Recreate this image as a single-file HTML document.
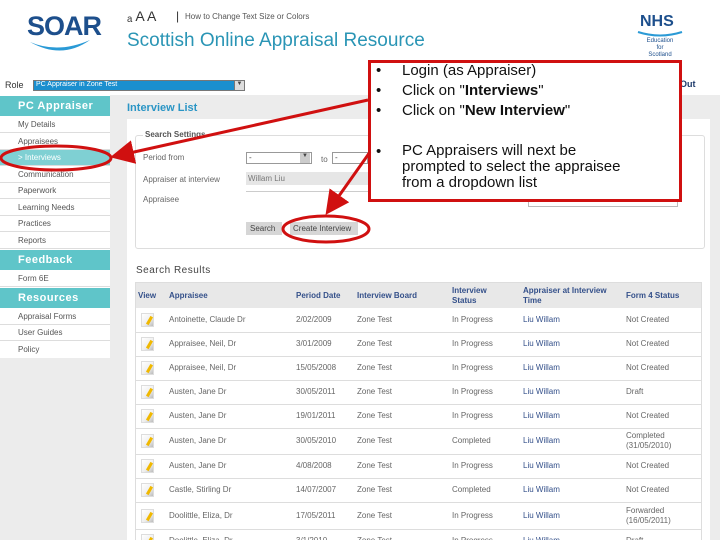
<!DOCTYPE html>
<html style="width:720px;height:540px;overflow:hidden"><head><meta charset="utf-8"><style>
*{margin:0;padding:0;box-sizing:border-box}
body{width:720px;height:540px;overflow:hidden;background:#fff;font-family:"Liberation Sans",Arial,sans-serif;position:relative;color:#444}
.a{position:absolute;white-space:nowrap}
.sb{position:absolute;left:0;width:110px;background:#fff;font-size:8px;color:#555}
.item{position:absolute;left:0;width:110px;height:16px;border-bottom:1px solid #ddd;padding:3px 0 0 18px;font-size:8px;color:#555}
.hd{position:absolute;left:0;width:110px;background:#5fc5c9;color:#fff;font-weight:bold;font-size:11px;padding-left:18px;letter-spacing:.5px}
.t{position:absolute;font-size:8px;color:#666;white-space:nowrap}
.th{position:absolute;font-size:8px;color:#34508a;font-weight:bold;white-space:nowrap}
.ic{position:absolute;left:141px;width:13px;height:14px;background:linear-gradient(135deg,#fff 0,#eee 60%,#bbb);border:1px solid #ddd}
.ic:after{content:"";position:absolute;left:6px;top:2px;width:3px;height:9px;background:#f0b800;transform:rotate(30deg)}
</style></head><body>
<div class="a" style="left:27px;top:11px;font-size:27px;font-weight:bold;color:#1d4f8c;letter-spacing:-1px">SOAR</div>
<svg class="a" style="left:28px;top:38px" width="64" height="16"><path d="M2 4 Q30 16 62 2 Q34 22 2 4Z" fill="#2a9ad6"/></svg>
<div class="a" style="left:127px;top:8px;font-size:14px;color:#333">ₐ A A</div>
<div class="a" style="left:176px;top:9px;font-size:12px;color:#333">|</div>
<div class="a" style="left:185px;top:12px;font-size:8px;color:#555">How to Change Text Size or Colors</div>
<div class="a" style="left:127px;top:30px;font-size:19px;color:#2a95b5">Scottish Online Appraisal Resource</div>
<div class="a" style="left:640px;top:13px;font-size:16px;font-weight:bold;color:#1d4f8c">NHS</div>
<svg class="a" style="left:637px;top:30px" width="46" height="8"><path d="M1 2 Q23 9 45 2" stroke="#2a9ad6" stroke-width="2" fill="none"/></svg>
<div class="a" style="left:640px;top:38px;width:40px;text-align:center;font-size:6px;line-height:7px;color:#1d4f8c;white-space:normal">Education<br>for<br>Scotland</div>
<div class="a" style="left:5px;top:80px;font-size:9px;color:#333">Role</div>
<div class="a" style="left:33px;top:80px;width:212px;height:11px;background:#1a8fcf;border:1px solid #777;font-size:7px;color:#fff;padding-left:2px">PC Appraiser in Zone Test</div>
<div class="a" style="left:234px;top:80px;width:11px;height:11px;background:#ddd;border:1px solid #777;font-size:6px;text-align:center">▼</div>
<div class="a" style="left:680px;top:79px;font-size:9px;font-weight:bold;color:#1d3a6b">Out</div>
<div class="a" style="left:0;top:95px;width:720px;height:445px;background:#ececec"></div>
<div class="a" style="left:127px;top:119px;width:583px;height:421px;background:#fff"></div>
<div class="sb" style="top:95px;height:263px"></div>
<div class="hd" style="top:96px;height:20px;line-height:20px">PC Appraiser</div>
<div class="item" style="top:117px">My Details</div>
<div class="item" style="top:134px">Appraisees</div>
<div class="item" style="top:150px;background:#7fd0d3;color:#fff">&gt; Interviews</div>
<div class="item" style="top:167px">Communication</div>
<div class="item" style="top:183px">Paperwork</div>
<div class="item" style="top:200px">Learning Needs</div>
<div class="item" style="top:216px">Practices</div>
<div class="item" style="top:233px">Reports</div>
<div class="hd" style="top:250px;height:20px;line-height:20px">Feedback</div>
<div class="item" style="top:271px">Form 6E</div>
<div class="hd" style="top:288px;height:20px;line-height:20px">Resources</div>
<div class="item" style="top:309px">Appraisal Forms</div>
<div class="item" style="top:325px">User Guides</div>
<div class="item" style="top:342px;border:none">Policy</div>
<div class="a" style="left:127px;top:102px;font-size:11px;font-weight:bold;color:#2a95c5">Interview List</div>
<div class="a" style="left:135px;top:135px;width:570px;height:114px;border:1px solid #ddd;border-radius:3px"></div>
<div class="a" style="left:143px;top:130px;font-size:8px;font-weight:bold;color:#555;background:#fff;padding:0 2px">Search Settings</div>
<div class="t" style="left:143px;top:153px">Period from</div>
<div class="t" style="left:143px;top:175px">Appraiser at interview</div>
<div class="t" style="left:143px;top:195px">Appraisee</div>
<div class="a" style="left:246px;top:152px;width:66px;height:12px;border:1px solid #999;font-size:8px;padding-left:2px">-</div>
<div class="a" style="left:300px;top:153px;width:10px;height:10px;background:#ccc;font-size:6px;text-align:center">▼</div>
<div class="t" style="left:321px;top:155px">to</div>
<div class="a" style="left:332px;top:152px;width:36px;height:12px;border:1px solid #999;font-size:8px;padding-left:2px">-</div>
<div class="a" style="left:246px;top:172px;width:122px;height:13px;background:#e6e6e6;font-size:8px;color:#777;padding:2px">Willam Liu</div>
<div class="a" style="left:246px;top:191px;width:122px;height:1px;background:#ccc"></div>
<div class="a" style="left:246px;top:222px;width:36px;height:13px;background:#d6d6d6;font-size:8px;padding:2px 4px">Search</div>
<div class="a" style="left:290px;top:222px;width:68px;height:13px;background:#d6d6d6;font-size:8px;padding:2px 3px">Create Interview</div>
<div class="a" style="left:528px;top:195px;width:150px;height:12px;border:1px solid #bbb"></div>
<div class="a" style="left:136px;top:265px;font-size:10px;color:#444;letter-spacing:.5px">Search Results</div>
<div class="a" style="left:135px;top:282px;width:567px;height:270px;border:1px solid #ddd"></div>
<div class="a" style="left:136px;top:283px;width:565px;height:25px;background:#e8e8e8"></div>
<div class="th" style="left:138px;top:291px">View</div>
<div class="th" style="left:169px;top:291px">Appraisee</div>
<div class="th" style="left:296px;top:291px">Period Date</div>
<div class="th" style="left:357px;top:291px">Interview Board</div>
<div class="th" style="left:452px;top:286px;line-height:10px">Interview<br>Status</div>
<div class="th" style="left:523px;top:286px;line-height:10px">Appraiser at Interview<br>Time</div>
<div class="th" style="left:626px;top:291px">Form 4 Status</div>
<div id="rows"></div>
<script>
var r=[["Antoinette, Claude Dr","2/02/2009","In Progress","Not Created",308,332],
["Appraisee, Neil, Dr","3/01/2009","In Progress","Not Created",332,356],
["Appraisee, Neil, Dr","15/05/2008","In Progress","Not Created",356,380],
["Austen, Jane Dr","30/05/2011","In Progress","Draft",380,404],
["Austen, Jane Dr","19/01/2011","In Progress","Not Created",404,428],
["Austen, Jane Dr","30/05/2010","Completed","Completed<br>(31/05/2010)",428,454],
["Austen, Jane Dr","4/08/2008","In Progress","Not Created",454,478],
["Castle, Stirling Dr","14/07/2007","Completed","Not Created",478,502],
["Doolittle, Eliza, Dr","17/05/2011","In Progress","Forwarded<br>(16/05/2011)",502,529],
["Doolittle, Eliza, Dr","3/1/2010","In Progress","Draft",529,553]];
var h="";r.forEach(function(x){var c=(x[4]+x[5])/2-5;
h+='<div class="a" style="left:136px;top:'+x[5]+'px;width:565px;height:1px;background:#ddd"></div>';
h+='<div class="ic" style="top:'+(c-2)+'px"></div>';
h+='<div class="t" style="left:169px;top:'+c+'px">'+x[0]+'</div><div class="t" style="left:296px;top:'+c+'px">'+x[1]+'</div><div class="t" style="left:357px;top:'+c+'px">Zone Test</div><div class="t" style="left:452px;top:'+c+'px">'+x[2]+'</div><div class="t" style="left:523px;top:'+c+'px;color:#34508a">Liu Willam</div>';
var tw=x[3].indexOf("<br>")>0;h+='<div class="t" style="left:626px;top:'+(tw?c-5:c)+'px;line-height:10px">'+x[3]+'</div>';});
document.getElementById("rows").innerHTML=h;
</script>
<div class="a" style="left:368px;top:60px;width:314px;height:142px;background:#fff;border:3px solid #d01010"></div>
<div class="a" style="left:376px;top:61px;font-size:15px;color:#111;line-height:20px">•<br>•<br>•</div>
<div class="a" style="left:402px;top:61px;font-size:15px;color:#111;line-height:20px">Login (as Appraiser)<br>Click on "<b>Interviews</b>"<br>Click on "<b>New Interview</b>"</div>
<div class="a" style="left:376px;top:143px;font-size:15px;color:#111">•</div>
<div class="a" style="left:402px;top:143px;font-size:15px;color:#111;line-height:16px">PC Appraisers will next be<br>prompted to select the appraisee<br>from a dropdown list</div>
<svg class="a" style="left:0;top:0" width="720" height="540">
<defs><marker id="m" markerWidth="8" markerHeight="8" refX="6" refY="4" orient="auto"><path d="M0 0L8 4L0 8Z" fill="#d01010"/></marker></defs>
<line x1="368" y1="100" x2="116" y2="156" stroke="#d01010" stroke-width="3" marker-end="url(#m)"/>
<line x1="370" y1="152" x2="329" y2="210" stroke="#d01010" stroke-width="3" marker-end="url(#m)"/>
<ellipse cx="56" cy="158" rx="55" ry="12" fill="none" stroke="#d01010" stroke-width="3"/>
<ellipse cx="326" cy="229" rx="43" ry="13" fill="none" stroke="#d01010" stroke-width="3"/>
</svg>
</body></html>
